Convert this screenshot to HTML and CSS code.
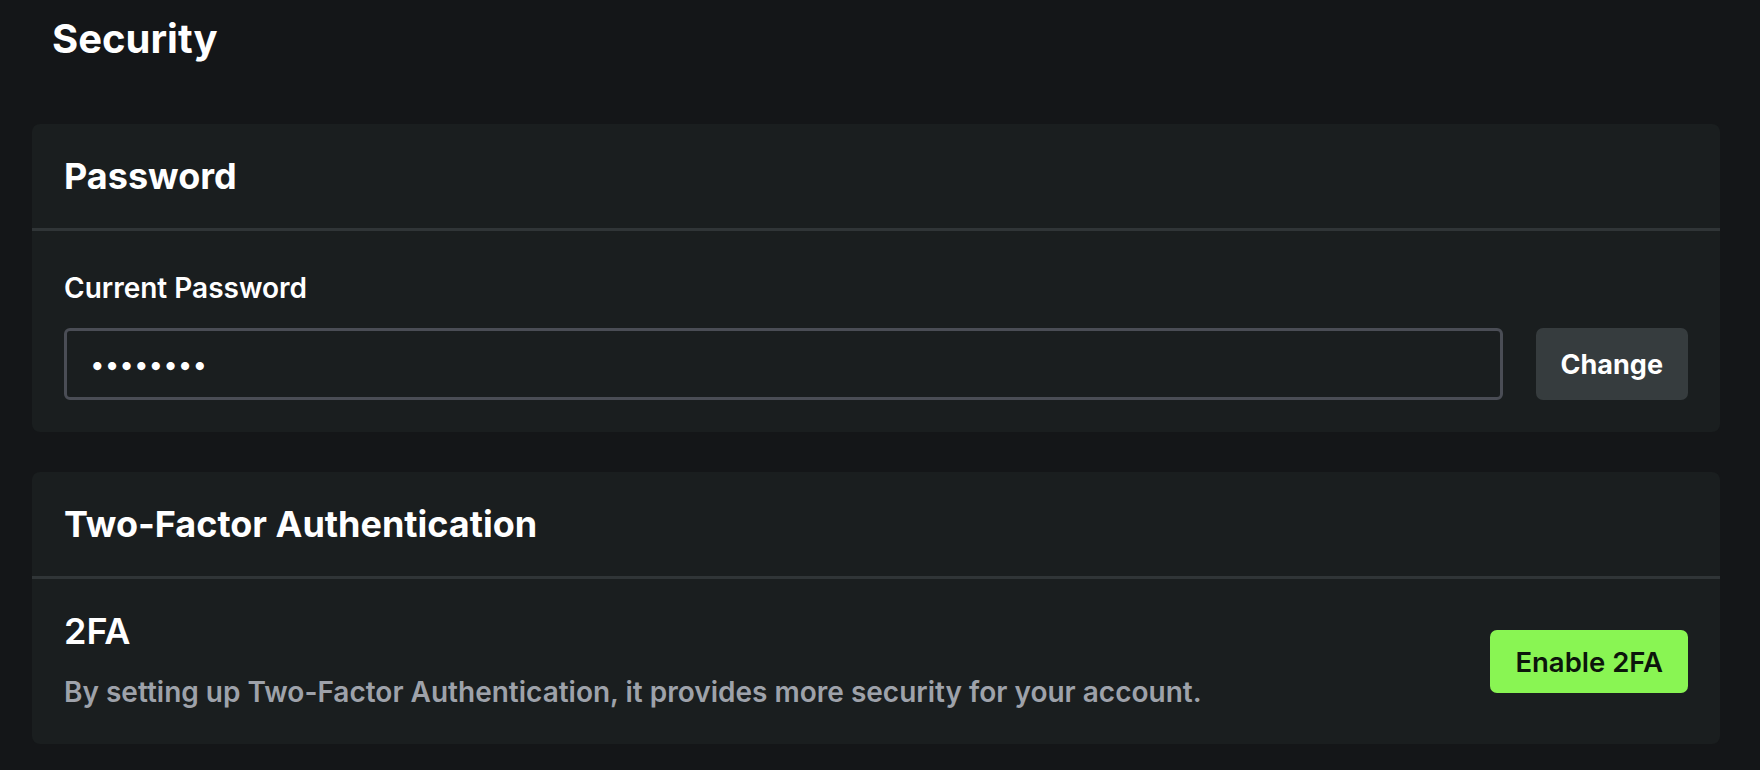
FILE: index.html
```html
<!DOCTYPE html>
<html>
<head>
  <title>Security</title>
  <link rel="stylesheet" href="styles.css">
</head>
<body>
  <div class="page">
    <h1 class="page-title">Security</h1>

    <section class="card">
      <div class="card-header">
        <h2>Password</h2>
      </div>
      <div class="card-body">
        <label class="field-label" for="current-password">Current Password</label>
        <div class="field-row">
          <input class="text-input" id="current-password" type="password" value="hunter22" readonly>
          <button class="btn btn-dark">Change</button>
        </div>
      </div>
    </section>

    <section class="card">
      <div class="card-header">
        <h2>Two-Factor Authentication</h2>
      </div>
      <div class="card-body setting-row">
        <div class="setting-text">
          <h3>2FA</h3>
          <p>By setting up Two-Factor Authentication, it provides more security for your account.</p>
        </div>
        <button class="btn btn-green">Enable 2FA</button>
      </div>
    </section>
  </div>
</body>
</html>
```

FILE: styles.css
```css
/* dark account settings page */
body {
  margin: 0;
  background-color: #141618;
  color: #fff;
  font-family: Inter, "Noto Sans", sans-serif;
}
.page {
  padding: 15px 40px 20px 32px;
}
.page-title {
  margin: 0 0 61px 20px;
  font-size: 40px;
  line-height: 48px;
  font-weight: 700;
}
.card {
  background-color: #1a1e1f;
  border-radius: 8px;
  margin-bottom: 40px;
}
.card-header {
  padding: 32px 32px;
  border-bottom: 3px solid #303537;
}
.card-header h2 {
  margin: 0;
  font-size: 36px;
  line-height: 40px;
  font-weight: 700;
}
.card-body {
  padding: 32px;
}
.field-label {
  display: block;
  margin: 10px 0 25px;
  font-size: 28px;
  line-height: 30px;
  font-weight: 600;
}
.field-row {
  display: flex;
  align-items: center;
  gap: 33px;
}
.text-input {
  flex: 1;
  box-sizing: border-box;
  height: 72px;
  padding: 0 23px;
  background-color: #1a1e1f;
  border: 3px solid #4a4d55;
  border-radius: 6px;
  color: #fff;
  font-family: Inter, sans-serif;
  font-size: 26px;
  outline: none;
}
.btn {
  border: none;
  border-radius: 7px;
  font-family: Inter, sans-serif;
  font-size: 27px;
  cursor: pointer;
  padding: 0 25px;
}
.btn-dark {
  height: 72px;
  background-color: #363c3e;
  color: #fff;
  font-weight: 700;
}
.btn-green {
  height: 63px;
  background-color: #89f553;
  color: #0c160b;
  font-size: 27.5px;
  font-weight: 600;
}
.setting-row {
  display: flex;
  align-items: center;
  justify-content: space-between;
}
.setting-text h3 {
  margin: 0;
  font-size: 36px;
  line-height: 40px;
  font-weight: 600;
}
.setting-text p {
  margin: 21px 0 0;
  font-size: 28px;
  line-height: 40px;
  font-weight: 600;
  color: #9ea2aa;
}
```
